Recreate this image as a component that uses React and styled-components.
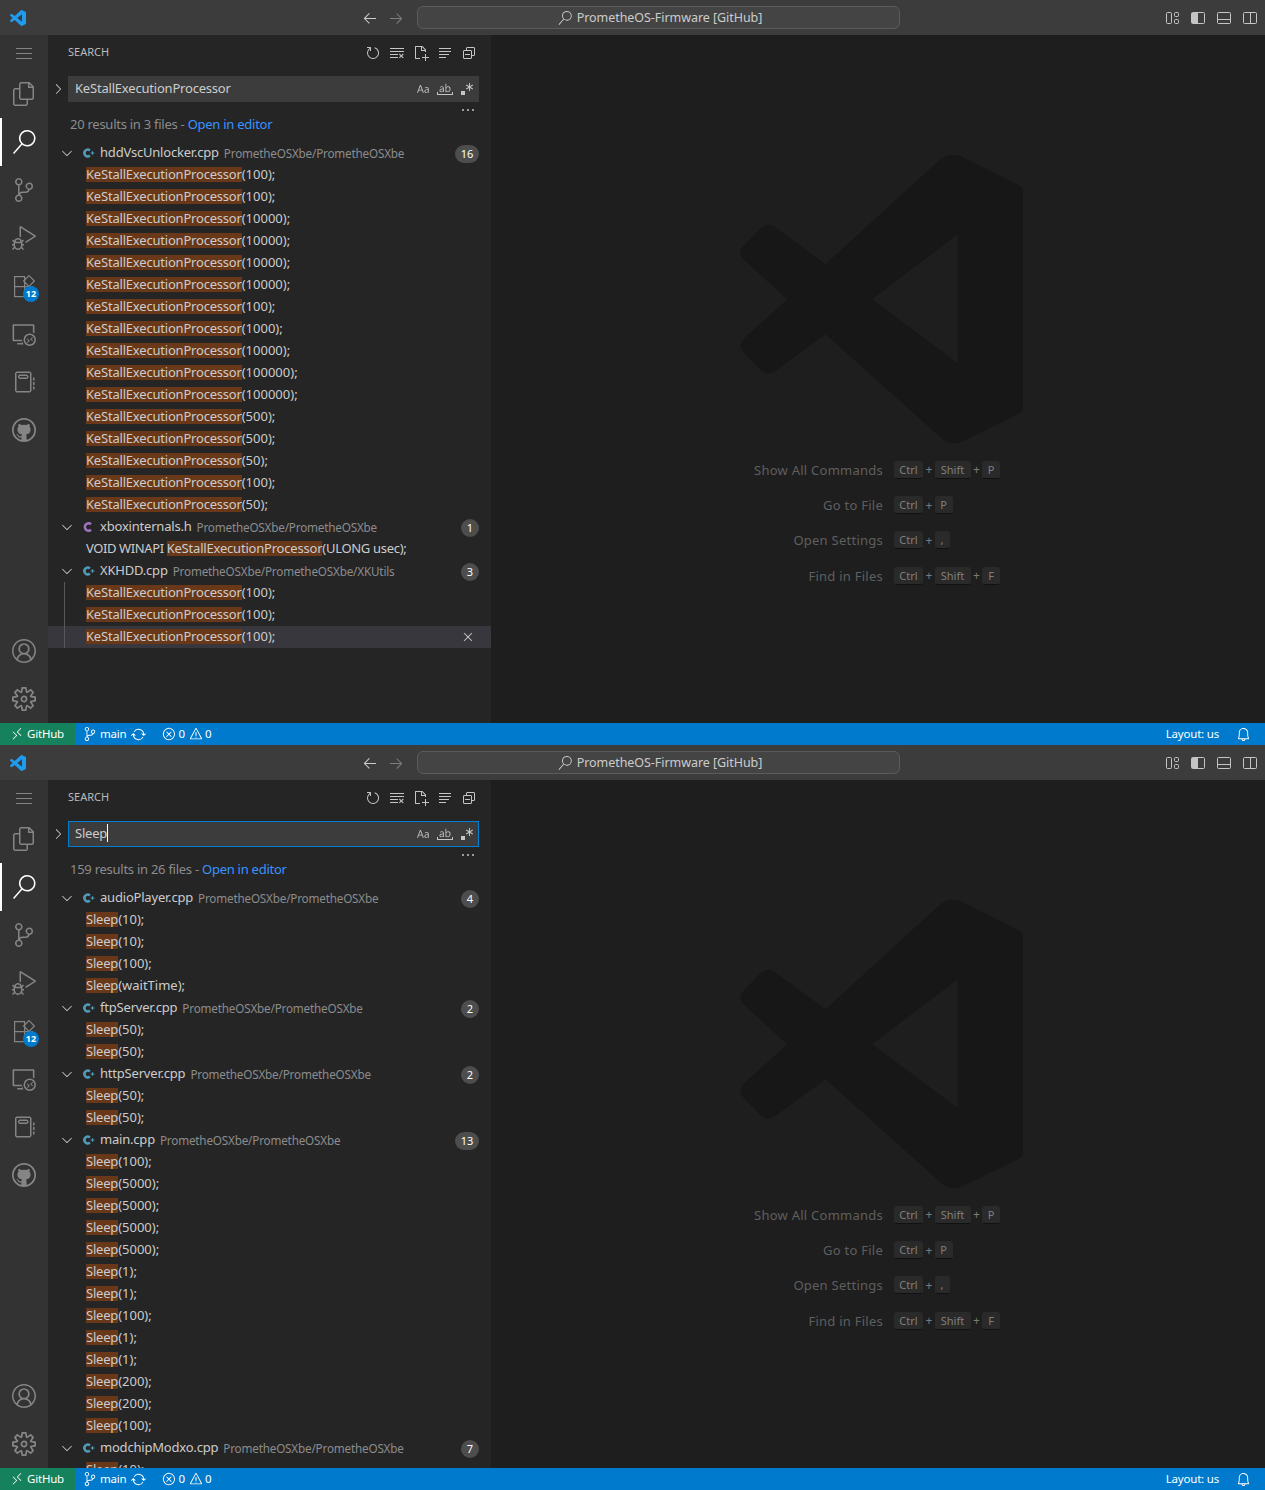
import styled, { createGlobalStyle } from "styled-components";
import {
  VscAccount,
  VscArrowLeft,
  VscArrowRight,
  VscBell,
  VscCaseSensitive,
  VscChevronDown,
  VscChevronRight,
  VscClearAll,
  VscClose,
  VscCollapseAll,
  VscDebugAlt,
  VscEllipsis,
  VscError,
  VscFiles,
  VscGithub,
  VscNewFile,
  VscNotebook,
  VscRefresh,
  VscRegex,
  VscRemote,
  VscRemoteExplorer,
  VscSearch,
  VscSettingsGear,
  VscSourceControl,
  VscSync,
  VscWarning,
  VscWholeWord,
} from "react-icons/vsc";

const LOGO =
  "M23.15 2.587L18.21.21a1.494 1.494 0 0 0-1.705.29l-9.46 8.63-4.12-3.128a.999.999 0 0 0-1.276.057L.327 7.261A1 1 0 0 0 .326 8.74L3.899 12 .326 15.26a1 1 0 0 0 .001 1.479L1.65 17.94a.999.999 0 0 0 1.276.057l4.12-3.128 9.46 8.63a1.492 1.492 0 0 0 1.704.29l4.942-2.377A1.5 1.5 0 0 0 24 20.06V3.939a1.5 1.5 0 0 0-.85-1.352zm-5.146 14.861L10.826 12l7.178-5.448v10.896z";

const WATERMARK =
  "M660 60Q695 32 730 55L890 135Q908 143 908 160V805Q908 818 890 827L730 905Q695 925 660 895L315 585L165 695Q143 712 122 695L68 640Q50 620 68 600L200 480L68 360Q50 340 68 320L122 265Q143 248 165 265L315 375ZM712 285L455 480L712 672Z";

const ROOT_PATH = "PrometheOSXbe/PrometheOSXbe";

const keyWidths = { Ctrl: 29, Shift: 36, P: 18, F: 18, ",": 15 };

const firstResults = [
  {
    name: "hddVscUnlocker.cpp",
    path: ROOT_PATH,
    count: 16,
    match: "KeStallExecutionProcessor",
    lines: ["(100);", "(100);", "(10000);", "(10000);", "(10000);", "(10000);", "(100);", "(1000);", "(10000);", "(100000);", "(100000);", "(500);", "(500);", "(50);", "(100);", "(50);"],
  },
  {
    name: "xboxinternals.h",
    path: ROOT_PATH,
    count: 1,
    header: true,
    match: "KeStallExecutionProcessor",
    lines: ["(ULONG usec);"],
    before: "VOID WINAPI ",
  },
  {
    name: "XKHDD.cpp",
    path: ROOT_PATH + "/XKUtils",
    count: 3,
    match: "KeStallExecutionProcessor",
    guide: true,
    selectedLine: 2,
    lines: ["(100);", "(100);", "(100);"],
  },
];

const secondResults = [
  { name: "audioPlayer.cpp", path: ROOT_PATH, count: 4, match: "Sleep", lines: ["(10);", "(10);", "(100);", "(waitTime);"] },
  { name: "ftpServer.cpp", path: ROOT_PATH, count: 2, match: "Sleep", lines: ["(50);", "(50);"] },
  { name: "httpServer.cpp", path: ROOT_PATH, count: 2, match: "Sleep", lines: ["(50);", "(50);"] },
  {
    name: "main.cpp",
    path: ROOT_PATH,
    count: 13,
    match: "Sleep",
    lines: ["(100);", "(5000);", "(5000);", "(5000);", "(5000);", "(1);", "(1);", "(100);", "(1);", "(1);", "(200);", "(200);", "(100);"],
  },
  { name: "modchipModxo.cpp", path: ROOT_PATH, count: 7, match: "Sleep", lines: ["(10);"] },
];

const shortcuts = [
  { label: "Show All Commands", keys: ["Ctrl", "Shift", "P"] },
  { label: "Go to File", keys: ["Ctrl", "P"] },
  { label: "Open Settings", keys: ["Ctrl", ","] },
  { label: "Find in Files", keys: ["Ctrl", "Shift", "F"] },
];

const FileIcon = ({ header }) => (
  <svg width="14" height="14" viewBox="0 0 14 14" fill="none">
    <path
      d={header ? "M10 4.2A3.7 3.7 0 1 0 10 9.8" : "M8.9 4.5A3.3 3.3 0 1 0 8.9 9.5"}
      stroke={header ? "#a074c4" : "#519aba"}
      strokeWidth="2.5"
    />
    {!header && <path d="M9.6 7h3.8M11.5 5.2v3.6" stroke="#519aba" strokeWidth="1.2" />}
  </svg>
);

const MenuIcon = () => (
  <svg width="16" height="16" viewBox="0 0 16 16" stroke="#858585">
    <path d="M0 3.5h16M0 8.5h16M0 13.5h16" />
  </svg>
);

const ExtensionsIcon = () => (
  <svg width="24" height="24" viewBox="0 0 24 24" fill="none" stroke="currentColor" strokeWidth="1.2">
    <path d="M2.6 2.6h10v20h-10zM2.6 12.6h10M12.6 12.6h8v10h-8" />
    <path d="M17 1.6l5.4 5.4-5.4 5.4-5.4-5.4z" />
  </svg>
);

const OpenEditorIcon = () => (
  <svg width="16" height="16" viewBox="0 0 16 16" stroke="currentColor">
    <path d="M2 3.5h12M2 6.5h12M2 9.5h10M2 12.5h7" />
  </svg>
);

const LayoutControl = () => (
  <svg width="16" height="16" viewBox="0 0 16 16" fill="none" stroke="#c5c5c5">
    <rect x="1.5" y="2.5" width="5" height="11" rx="1" />
    <rect x="9.5" y="2.5" width="4" height="4" rx="1" />
    <rect x="9.5" y="9.5" width="4" height="4" rx="1" />
  </svg>
);

const LayoutSidebar = () => (
  <svg width="16" height="16" viewBox="0 0 16 16" fill="none" stroke="#c5c5c5">
    <rect x="1.5" y="2.5" width="13" height="11" rx="1" />
    <rect x="2" y="3" width="5" height="10" fill="#c5c5c5" stroke="none" />
    <path d="M7.5 3v10" />
  </svg>
);

const LayoutPanel = () => (
  <svg width="16" height="16" viewBox="0 0 16 16" fill="none" stroke="#c5c5c5">
    <rect x="1.5" y="2.5" width="13" height="11" rx="1" />
    <path d="M2 9.5h12" />
  </svg>
);

const LayoutSecondary = () => (
  <svg width="16" height="16" viewBox="0 0 16 16" fill="none" stroke="#c5c5c5">
    <rect x="1.5" y="2.5" width="13" height="11" rx="1" />
    <path d="M8.5 3v10" />
  </svg>
);

const FileGroup = ({ file }) => (
  <>
    <FileRow>
      <Twistie>
        <VscChevronDown size={16} />
      </Twistie>
      <FileIconSlot>
        <FileIcon header={file.header} />
      </FileIconSlot>
      <FileName>{file.name}</FileName>
      <FilePath>{file.path}</FilePath>
      <Badge $wide={file.count > 9}>{file.count}</Badge>
    </FileRow>
    {file.lines.map((line, i) => (
      <LineRow key={i} $selected={file.selectedLine === i}>
        {file.guide && <Guide />}
        {file.before && <LineHead>{file.before}</LineHead>}
        <Match>{file.match}</Match>
        <LineTail $tight={!!file.before}>{line}</LineTail>
        {file.selectedLine === i && (
          <RowClose>
            <VscClose size={16} />
          </RowClose>
        )}
      </LineRow>
    ))}
  </>
);

const Window = ({ query, focused, summary, results }) => (
  <WindowFrame>
    <TitleBar>
      <LogoSlot>
        <svg width="16" height="16" viewBox="0 0 24 24">
          <path d={LOGO} fill="#1f9cf0" />
        </svg>
      </LogoSlot>
      <NavButton $left="322px">
        <VscArrowLeft size={16} />
      </NavButton>
      <NavButton $dim>
        <VscArrowRight size={16} />
      </NavButton>
      <CommandCenter>
        <VscSearch size={14} />
        <TitleText>PrometheOS-Firmware [GitHub]</TitleText>
      </CommandCenter>
      <TitleActions>
        <LayoutControl />
        <LayoutSidebar />
        <LayoutPanel />
        <LayoutSecondary />
      </TitleActions>
    </TitleBar>
    <Workbench>
      <ActivityBar>
        <MenuItem>
          <MenuIcon />
        </MenuItem>
        <ActivityItem>
          <VscFiles size={24} />
        </ActivityItem>
        <ActivityItem $active>
          <VscSearch size={24} />
        </ActivityItem>
        <ActivityItem>
          <VscSourceControl size={24} />
        </ActivityItem>
        <ActivityItem>
          <VscDebugAlt size={24} />
        </ActivityItem>
        <ActivityItem>
          <ExtensionsIcon />
          <ActivityBadge>12</ActivityBadge>
        </ActivityItem>
        <ActivityItem>
          <VscRemoteExplorer size={24} />
        </ActivityItem>
        <ActivityItem>
          <VscNotebook size={24} />
        </ActivityItem>
        <ActivityItem>
          <VscGithub size={24} />
        </ActivityItem>
        <ActivitySpacer />
        <ActivityItem>
          <VscAccount size={24} />
        </ActivityItem>
        <ActivityItem>
          <VscSettingsGear size={24} />
        </ActivityItem>
      </ActivityBar>
      <Sidebar>
        <SidebarHeader>
          <SidebarTitle>SEARCH</SidebarTitle>
          <HeaderActions>
            <VscRefresh size={16} />
            <VscClearAll size={16} />
            <VscNewFile size={16} />
            <OpenEditorIcon />
            <VscCollapseAll size={16} />
          </HeaderActions>
        </SidebarHeader>
        <SearchRow>
          <SearchToggle>
            <VscChevronRight size={16} />
          </SearchToggle>
          <SearchInput $focused={focused}>
            <SearchText>
              {query}
              {focused && <Caret />}
            </SearchText>
            <InputOptions>
              <VscCaseSensitive size={16} />
              <VscWholeWord size={16} />
              <VscRegex size={16} />
            </InputOptions>
          </SearchInput>
        </SearchRow>
        <MoreRow>
          <VscEllipsis size={16} />
        </MoreRow>
        <Summary>
          {summary} - <OpenLink>Open in editor</OpenLink>
        </Summary>
        <ResultTree>
          {results.map((file) => (
            <FileGroup key={file.name} file={file} />
          ))}
        </ResultTree>
      </Sidebar>
      <Editor>
        <LogoSvg viewBox="58 47 850 868">
          <path d={WATERMARK} fillRule="evenodd" />
        </LogoSvg>
        <ShortcutTable>
          {shortcuts.map((item) => (
            <ShortcutRow key={item.label}>
              <ShortcutLabel>{item.label}</ShortcutLabel>
              <ShortcutKeys>
                {item.keys.map((key, i) => (
                  <KeyGroup key={key}>
                    {i > 0 && <Plus>+</Plus>}
                    <Key $width={keyWidths[key]}>{key}</Key>
                  </KeyGroup>
                ))}
              </ShortcutKeys>
            </ShortcutRow>
          ))}
        </ShortcutTable>
      </Editor>
    </Workbench>
    <StatusBar>
      <RemoteItem>
        <VscRemote size={14} />
        <StatusText>GitHub</StatusText>
      </RemoteItem>
      <StatusGroup $gap="3px" $left="8px">
        <VscSourceControl size={14} />
        <StatusText>main</StatusText>
        <VscSync size={15} style={{ marginLeft: 2 }} />
      </StatusGroup>
      <StatusGroup $gap="2px" $left="16px">
        <VscError size={14} />
        <StatusText>0</StatusText>
        <VscWarning size={14} style={{ marginLeft: 2 }} />
        <StatusText>0</StatusText>
      </StatusGroup>
      <StatusRight>
        <StatusText>Layout: us</StatusText>
        <VscBell size={15} />
      </StatusRight>
    </StatusBar>
  </WindowFrame>
);

const App = () => (
  <>
    <GlobalStyle />
    <Window query="KeStallExecutionProcessor" summary="20 results in 3 files" results={firstResults} />
    <Window query="Sleep" focused summary="159 results in 26 files" results={secondResults} />
  </>
);

export default App;

const GlobalStyle = createGlobalStyle`
  html, body {
    margin: 0;
    background: #1e1e1e;
  }
  body {
    font-family: "Noto Sans", "Open Sans", sans-serif;
    font-size: 13px;
    letter-spacing: -0.2px;
    color: #cccccc;
  }
  * {
    box-sizing: border-box;
  }
`;

const WindowFrame = styled.div`
  width: 1265px;
  height: 745px;
  display: flex;
  flex-direction: column;
  overflow: hidden;
`;

const TitleBar = styled.div`
  height: 35px;
  flex: none;
  display: flex;
  align-items: center;
  background: #3c3c3c;
`;

const LogoSlot = styled.div`
  width: 35px;
  display: flex;
  justify-content: center;
`;

const NavButton = styled.div`
  width: 26px;
  display: flex;
  justify-content: center;
  margin-left: ${(p) => p.$left || "0"};
  color: ${(p) => (p.$dim ? "#7d7d7d" : "#cccccc")};
`;

const CommandCenter = styled.div`
  width: 483px;
  height: 23px;
  margin-left: 8px;
  padding-left: 3px;
  display: flex;
  align-items: center;
  justify-content: center;
  gap: 5px;
  background: #444444;
  border: 1px solid #5b5b5b;
  border-radius: 6px;
  color: #cccccc;
`;

const TitleText = styled.span`
  font-size: 12.5px;
  letter-spacing: -0.05px;
`;

const TitleActions = styled.div`
  margin-left: auto;
  padding-right: 7px;
  display: flex;
  gap: 10px;
  & > :first-child {
    margin-right: -1px;
  }
`;

const Workbench = styled.div`
  flex: 1;
  min-height: 0;
  display: flex;
`;

const ActivityBar = styled.div`
  width: 48px;
  flex: none;
  display: flex;
  flex-direction: column;
  background: #333333;
`;

const MenuItem = styled.div`
  height: 35px;
  flex: none;
  display: flex;
  align-items: center;
  justify-content: center;
`;

const ActivityItem = styled.div`
  position: relative;
  height: 48px;
  flex: none;
  display: flex;
  align-items: center;
  justify-content: center;
  color: ${(p) => (p.$active ? "#ffffff" : "#858585")};
  border-left: 2px solid ${(p) => (p.$active ? "#ffffff" : "transparent")};
  padding-right: 2px;
`;

const ActivityBadge = styled.span`
  position: absolute;
  left: 21px;
  top: 24px;
  min-width: 16px;
  height: 16px;
  border-radius: 8px;
  background: #007acc;
  color: #ffffff;
  font-size: 9px;
  font-weight: 700;
  line-height: 16px;
  letter-spacing: 0;
  text-align: center;
`;

const ActivitySpacer = styled.div`
  flex: 1;
`;

const Sidebar = styled.div`
  width: 443px;
  flex: none;
  display: flex;
  flex-direction: column;
  overflow: hidden;
  background: #252526;
`;

const SidebarHeader = styled.div`
  height: 35px;
  flex: none;
  display: flex;
  align-items: center;
  justify-content: space-between;
  padding: 0 14px 0 20px;
`;

const SidebarTitle = styled.div`
  margin-bottom: 2px;
  font-size: 11px;
  letter-spacing: 0;
  color: #bbbbbb;
`;

const HeaderActions = styled.div`
  display: flex;
  gap: 8px;
  color: #c5c5c5;
`;

const SearchRow = styled.div`
  margin-top: 6px;
  height: 26px;
  flex: none;
  display: flex;
  padding-right: 12px;
`;

const SearchToggle = styled.div`
  width: 20px;
  display: flex;
  align-items: center;
  justify-content: flex-end;
  padding-right: 2px;
  color: #c5c5c5;
`;

const SearchInput = styled.div`
  flex: 1;
  display: flex;
  align-items: center;
  justify-content: space-between;
  padding: 0 3px 0 6px;
  background: #3c3c3c;
  border: 1px solid ${(p) => (p.$focused ? "#007fd4" : "#3c3c3c")};
`;

const SearchText = styled.div`
  margin-bottom: 2px;
  color: #cccccc;
  display: flex;
  align-items: center;
`;

const Caret = styled.span`
  display: inline-block;
  width: 1px;
  height: 18px;
  background: #ffffff;
`;

const InputOptions = styled.div`
  display: flex;
  gap: 6px;
  color: #c5c5c5;
`;

const MoreRow = styled.div`
  height: 16px;
  flex: none;
  display: flex;
  justify-content: flex-end;
  align-items: center;
  padding-right: 15px;
  color: #c5c5c5;
`;

const Summary = styled.div`
  height: 24px;
  flex: none;
  display: flex;
  align-items: center;
  white-space: pre;
  padding: 0 0 12px 22px;
  letter-spacing: -0.26px;
  color: #8c8c8c;
`;

const OpenLink = styled.span`
  color: #3794ff;
`;

const ResultTree = styled.div`
  flex: 1;
  min-height: 0;
  overflow: hidden;
`;

const FileRow = styled.div`
  height: 22px;
  display: flex;
  align-items: center;
  padding-right: 12px;
  white-space: nowrap;
`;

const Twistie = styled.div`
  width: 33px;
  flex: none;
  display: flex;
  justify-content: flex-end;
  padding-right: 6px;
  color: #c5c5c5;
`;

const FileIconSlot = styled.div`
  width: 19px;
  flex: none;
  display: flex;
`;

const FileName = styled.span`
  margin-bottom: 2px;
  color: #cccccc;
`;

const FilePath = styled.span`
  margin-left: 5px;
  font-size: 11.7px;
  letter-spacing: -0.18px;
  color: #8c8c8c;
`;

const Badge = styled.span`
  margin: 2px 0 0 auto;
  min-width: ${(p) => (p.$wide ? "24px" : "18px")};
  height: 18px;
  border-radius: 9px;
  background: #4d4d4d;
  color: #ffffff;
  font-size: 11px;
  line-height: 18px;
  letter-spacing: 0;
  text-align: center;
`;

const LineRow = styled.div`
  position: relative;
  height: 22px;
  display: flex;
  align-items: center;
  padding: 0 0 2px 38px;
  white-space: pre;
  color: #cccccc;
  background: ${(p) => (p.$selected ? "#37373d" : "transparent")};
`;

const LineHead = styled.span`
  letter-spacing: -0.4px;
`;

const LineTail = styled.span`
  letter-spacing: ${(p) => (p.$tight ? "-0.3px" : "0")};
`;

const Guide = styled.span`
  position: absolute;
  left: 16px;
  top: 0;
  bottom: 0;
  width: 1px;
  background: #585858;
`;

const Match = styled.span`
  height: 15px;
  line-height: 15px;
  background: #683819;
`;

const RowClose = styled.span`
  position: absolute;
  right: 15px;
  top: 3px;
  color: #c5c5c5;
`;

const Editor = styled.div`
  flex: 1;
  display: flex;
  flex-direction: column;
  align-items: center;
  padding-top: 120px;
  background: #1e1e1e;
`;

const LogoSvg = styled.svg`
  width: 283px;
  height: 289px;
  flex: none;
  margin-left: 7px;
  fill: #171717;
`;

const ShortcutTable = styled.div`
  width: 400px;
  margin-left: 21px;
  margin-top: 8px;
`;

const ShortcutRow = styled.div`
  height: 35.4px;
  display: grid;
  grid-template-columns: 1fr 1fr;
  column-gap: 11px;
  align-items: center;
`;

const ShortcutLabel = styled.div`
  text-align: right;
  letter-spacing: 0.25px;
  color: #5f5f5f;
`;

const ShortcutKeys = styled.div`
  display: flex;
  align-items: center;
`;

const KeyGroup = styled.span`
  display: flex;
  align-items: center;
`;

const Plus = styled.span`
  width: 11.5px;
  text-align: center;
  font-size: 12px;
  color: #7a7a7a;
`;

const Key = styled.span`
  height: 18px;
  width: ${(p) => p.$width}px;
  font-size: 11px;
  line-height: 15px;
  letter-spacing: 0;
  text-align: center;
  color: #808080;
  background: #2a2a2a;
  border: 1px solid #2a2a2a;
  border-bottom-color: #111111;
  border-radius: 3px;
`;

const StatusBar = styled.div`
  height: 22px;
  flex: none;
  display: flex;
  align-items: center;
  background: #007acc;
  color: #ffffff;
  font-size: 11.5px;
`;

const StatusText = styled.span`
  margin-bottom: 2px;
`;

const RemoteItem = styled.div`
  width: 75px;
  height: 100%;
  display: flex;
  align-items: center;
  gap: 3px;
  padding-left: 10px;
  background: #16825d;
`;

const StatusGroup = styled.div`
  display: flex;
  align-items: center;
  gap: ${(p) => p.$gap};
  margin-left: ${(p) => p.$left};
`;

const StatusRight = styled.div`
  margin-left: auto;
  display: flex;
  align-items: center;
  gap: 17px;
  padding-right: 14px;
`;
